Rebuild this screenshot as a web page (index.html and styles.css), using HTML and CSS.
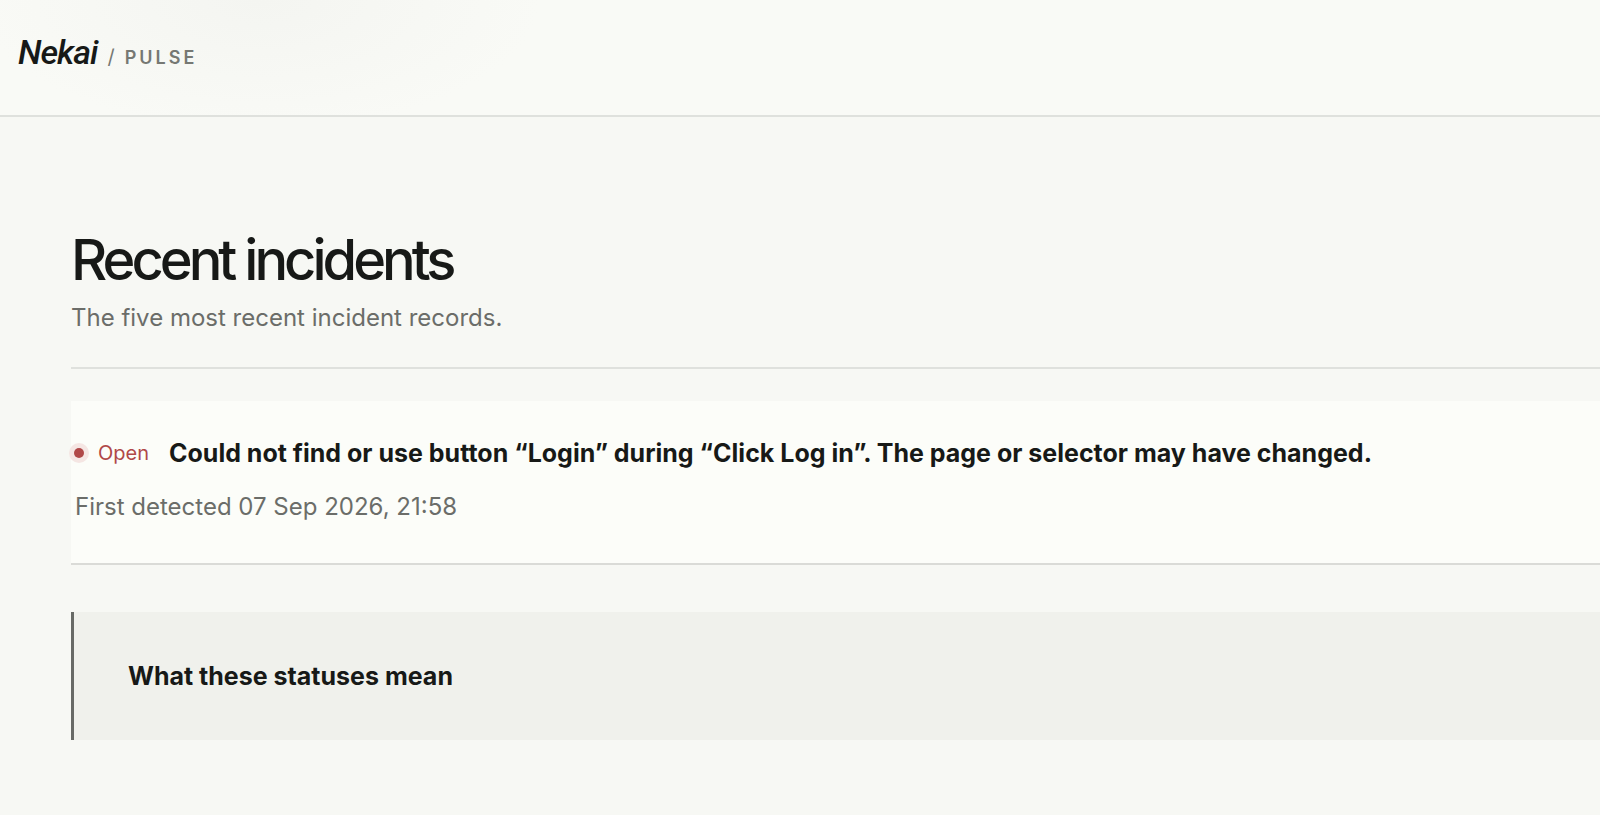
FILE: index.html
```html
<!DOCTYPE html>
<html lang="en">
<head>
<meta charset="utf-8">
<meta name="viewport" content="width=device-width, initial-scale=1">
<title>Nekai Pulse</title>
<link rel="stylesheet" href="styles.css">
</head>
<body>
<header class="site-header">
  <a class="brand" href="#"><span class="brand-name">Nekai</span><span class="brand-slash">/</span><span class="brand-product">PULSE</span></a>
</header>
<main class="content">
  <section class="incidents">
    <header class="section-head">
      <h1 class="section-title">Recent incidents</h1>
      <p class="section-lead">The five most recent incident records.</p>
    </header>
    <article class="incident">
      <div class="incident-row">
        <span class="status"><span class="status-dot"></span>Open</span>
        <h2 class="incident-title">Could not find or use button “Login” during “Click Log in”. The page or selector may have changed.</h2>
      </div>
      <p class="incident-time">First detected <time datetime="2026-09-07T21:58">07 Sep 2026, 21:58</time></p>
    </article>
  </section>
  <details class="legend">
    <summary class="legend-title">What these statuses mean</summary>
  </details>
</main>
</body>
</html>
```

FILE: styles.css
```css
* { box-sizing: border-box; }
body {
  margin: 0;
  min-height: 100vh;
  background: #f7f8f4;
  color: #171917;
  font-family: Inter, "Liberation Sans", sans-serif;
}
h1, h2, p { margin: 0; }
.site-header {
  display: flex;
  padding: 32px 18px 37px;
  border-bottom: 2px solid #dfe1dd;
  background: radial-gradient(ellipse 280px 130px at 260px 0, #f4f5f1, #f9faf6) #f9faf6;
}
.brand {
  display: inline-flex;
  align-items: baseline;
  gap: 10px;
  color: #767873;
  font-size: 20px;
  line-height: 40px;
  text-decoration: none;
}
.brand-name {
  color: #171917;
  font-family: Roboto, "Liberation Sans", sans-serif;
  font-size: 34px;
  font-style: italic;
  font-weight: 500;
  letter-spacing: -1px;
}
.brand-product {
  font-size: 18px;
  font-weight: 600;
  letter-spacing: 3px;
}
.content { padding: 111px 0 76px 71px; }
.section-head {
  padding-bottom: 29px;
  border-bottom: 2px solid #dfe1dd;
}
.section-title {
  font-size: 56px;
  font-weight: 500;
  line-height: 64px;
  letter-spacing: -4px;
}
.section-lead {
  margin-top: 6px;
  color: #6b6d69;
  font-size: 24px;
  line-height: 40px;
}
.incident {
  margin-top: 32px;
  padding: 32px 0 36px;
  border-bottom: 2px solid #dadbd7;
  background: #fcfdf9;
}
.incident-row {
  display: flex;
  align-items: center;
  gap: 20px;
}
.status {
  display: inline-flex;
  align-items: center;
  gap: 14px;
  color: #b04848;
  font-size: 20px;
}
.status-dot {
  width: 10px;
  height: 10px;
  margin-left: 3px;
  border-radius: 50%;
  background: #b04848;
  box-shadow: 0 0 0 5px #f5e6e3;
}
.incident-title {
  font-size: 25px;
  font-weight: 700;
  line-height: 40px;
}
.incident-time {
  margin-top: 14px;
  padding-left: 4px;
  color: #6b6d69;
  font-size: 24px;
  line-height: 40px;
}
.legend {
  margin-top: 47px;
  padding: 44px 54px;
  border-left: 3px solid #686a66;
  background: #f0f1ec;
}
.legend-title {
  font-size: 25px;
  font-weight: 700;
  line-height: 40px;
  list-style: none;
}
```
